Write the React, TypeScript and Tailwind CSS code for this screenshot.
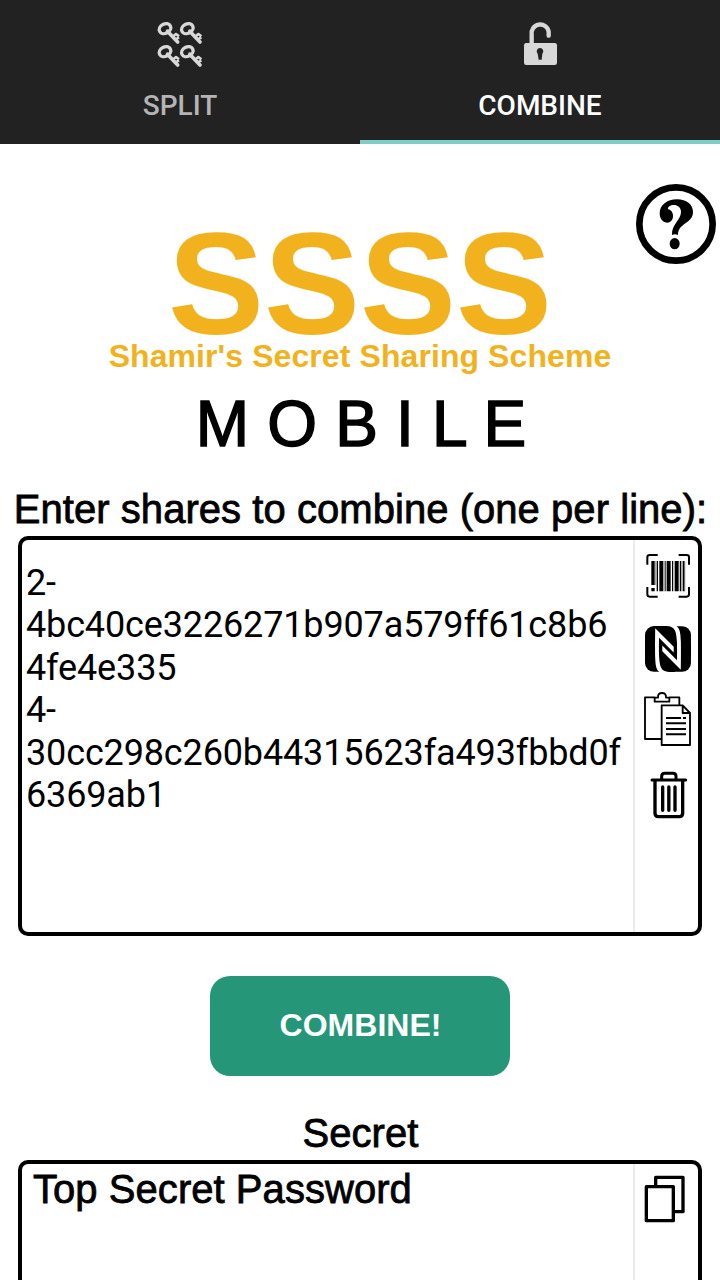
import React from "react";
import { SiNfc } from "react-icons/si";

const label =
  "whitespace-nowrap text-center font-['Liberation_Sans',sans-serif] text-[40px] leading-[46px] tracking-[0.05px] text-black [-webkit-text-stroke:0.8px_black]";

const keyPositions = [
  [0, 0],
  [67, 0],
  [0, 69],
  [67, 69],
];

function KeysIcon() {
  return (
    <svg className="h-[70px] w-[80px]" viewBox="0 0 240 210" fill="none" stroke="#d8d8d8">
      {keyPositions.map(([x, y]) => (
        <g key={`${x}-${y}`} transform={`translate(${x + 42} ${y + 27})`}>
          <ellipse cx="33" cy="29" rx="18" ry="14" transform="rotate(-28 33 29)" strokeWidth="10" />
          <circle cx="41" cy="37" r="6" fill="#d8d8d8" stroke="none" />
          <path d="M43 40 L71 69" strokeWidth="11" strokeLinecap="round" />
          <path d="M56 53 L66 45 L75 52 M65 61 L75 55" strokeWidth="8" strokeLinejoin="round" />
        </g>
      ))}
    </svg>
  );
}

function UnlockIcon() {
  return (
    <svg className="h-[70px] w-[80px]" viewBox="0 0 240 210" fill="none">
      <path d="M95 104 V74 A25 25 0 0 1 146 65 V77" stroke="#d8d8d8" strokeWidth="13" strokeLinecap="round" />
      <rect x="72" y="99" width="99" height="66" rx="7" fill="#d8d8d8" />
      <path d="M120 114 a10 10 0 0 1 7 17 L125 149 H116 L113 131 a10 10 0 0 1 7 -17Z" fill="#222" />
    </svg>
  );
}

function HelpIcon() {
  return (
    <svg className="h-[80px] w-[80px]" viewBox="0 0 240 240">
      <circle cx="120" cy="120" r="110" fill="#fff" stroke="#000" strokeWidth="20" />
      <path d="M108 153 C106 122 135 108 135 84 C135 68 121 61 106 64 C99 66 94 71 96 76 C106 77 111 86 111 96 C111 108 104 116 93 116 C79 116 71 102 71 88 C71 63 93 46 123 46 C151 46 171 61 171 84 C171 119 126 116 126 153 Q117 148 108 153Z" />
      <ellipse cx="116" cy="179" rx="15" ry="17" />
    </svg>
  );
}

function BarcodeIcon() {
  return (
    <svg className="h-[46px] w-[46px]" viewBox="58 69 138 138">
      <path d="M96 75 H72 Q65 75 65 82 V104 M159 75 H183 Q190 75 190 82 V104 M65 171 V193 Q65 200 72 200 H96 M190 171 V193 Q190 200 183 200 H159" fill="none" stroke="#000" strokeWidth="6" />
      <path d="M77 93h10v72h-10z M77 174h10v10h-10z M93 93h4v91h-4z M101 93h12v91h-12z M117 93h3v91h-3z M123 93h12v91h-12z M139 93h3v91h-3z M147 93h12v91h-12z M163 93h4v91h-4z M171 93h6v91h-6z" />
      <path d="M88 93h3v72h-3z M114 93h3v91h-3z M142 93h2v91h-2z M160 93h2v91h-2z M177 93h2v91h-2z" fill="#aaa" />
    </svg>
  );
}

function PasteIcon() {
  return (
    <svg className="h-[56px] w-[50px]" viewBox="54 33 150 168" fill="none" stroke="#000" strokeWidth="5.5" strokeLinejoin="round">
      <path d="M109 177 H60 V52 H89 M133 52 H163 V76" />
      <path d="M89 53 H99 Q98 39 111 39 Q124 39 123 53 H133 V65 H89Z" />
      <path d="M110 76 H173 L195 99 V195 H110Z M173 77 V99 H195" />
      <path d="M123 114 H168 M174 114 H183 M123 130 H183 M123 147 H183 M123 163 H183" strokeWidth="6" />
    </svg>
  );
}

function TrashIcon() {
  return (
    <svg className="h-[50px] w-[40px]" viewBox="71 270 120 150" fill="none" stroke="#000" strokeLinecap="round">
      <path d="M80 300 H181" strokeWidth="9" />
      <path d="M109 298 V289 Q109 280 118 280 H143 Q152 280 152 289 V298" strokeWidth="9" />
      <path d="M89 303 V400 Q89 410 99 410 H162 Q172 410 172 400 V303" strokeWidth="10" />
      <path d="M112 321 V391 M130.500 321 V391 M149 321 V391" strokeWidth="10" />
    </svg>
  );
}

function CopyIcon() {
  return (
    <svg className="h-[50px] w-[44px]" viewBox="129 72 132 150" fill="none" stroke="#000" strokeWidth="10" strokeLinejoin="round">
      <path d="M167 106 V82 H249 V185 H224" />
      <rect x="139" y="110" width="81" height="102" />
    </svg>
  );
}

export default function App() {
  return (
    <div className="flex h-[1280px] w-[720px] flex-col overflow-hidden bg-white">
      <nav className="grid h-[144px] shrink-0 grid-cols-2 bg-[#222222] font-[Roboto,sans-serif] text-[28px] font-medium leading-[34px]">
        <div className="flex flex-col items-center pt-[10px] text-[#b4b4b4]">
          <KeysIcon />
          <span className="mt-[9px]">SPLIT</span>
        </div>
        <div className="flex flex-col items-center border-b-4 border-[#80cbc4] pt-[10px] text-white">
          <UnlockIcon />
          <span className="mt-[9px]">COMBINE</span>
        </div>
      </nav>

      <header className="relative flex h-[342px] shrink-0 flex-col items-center pt-[59px] font-['Liberation_Sans',sans-serif]">
        <button className="absolute right-1 top-10" aria-label="Help">
          <HelpIcon />
        </button>
        <h1 className="text-[144px] font-bold leading-[164px] text-[#f2b21d]">SSSS</h1>
        <p className="-mt-[29px] whitespace-nowrap text-[32px] font-bold leading-[36px] tracking-[0.08px] text-[#f2b21d]">
          Shamir's Secret Sharing Scheme
        </p>
        <p className="mt-[13px] whitespace-nowrap pl-[2px] text-[64px] leading-[74px] tracking-[0.2px] text-black [-webkit-text-stroke:1.5px_black]">
          M O B I L E
        </p>
      </header>

      <main className="flex flex-col">
        <h2 className={`${label} pl-px`}>Enter shares to combine (one per line):</h2>
        <section className="mx-[18px] mt-1 flex h-[400px] rounded-[10px] border-4 border-black">
          <div className="w-[613px] shrink-0 whitespace-pre border-r-2 border-[#ececec] pl-1 pt-[22px] font-[Roboto,sans-serif] text-[36px] leading-[42.4px] tracking-[-0.14px] text-black">
            {"2-\n4bc40ce3226271b907a579ff61c8b6\n4fe4e335\n4-\n30cc298c260b44315623fa493fbbd0f\n6369ab1"}
          </div>
          <div className="flex grow flex-col items-center pl-[2px] pt-[13px]">
            <BarcodeIcon />
            <SiNfc className="mt-[27px] size-[46px] rounded-[9px]" />
            <div className="mt-[19px]"><PasteIcon /></div>
            <div className="ml-[2px] mt-[23px]"><TrashIcon /></div>
          </div>
        </section>
        <button className="mt-10 h-[100px] w-[300px] self-center rounded-[20px] bg-[#259778] pb-[2px] pl-px font-['Liberation_Sans',sans-serif] text-[32px] font-bold text-white">
          COMBINE!
        </button>
        <h2 className={`${label} mt-[34px] pl-px`}>Secret</h2>
        <section className="mx-[18px] mt-1 flex h-[400px] rounded-[10px] border-4 border-black">
          <div className="w-[613px] shrink-0 border-r-2 border-[#ececec] pl-[11px] pt-[2px] text-left">
            <p className={`${label} w-fit`}>Top Secret Password</p>
          </div>
          <div className="flex grow flex-col items-start pl-[8px] pt-[10px]">
            <CopyIcon />
          </div>
        </section>
      </main>
    </div>
  );
}
